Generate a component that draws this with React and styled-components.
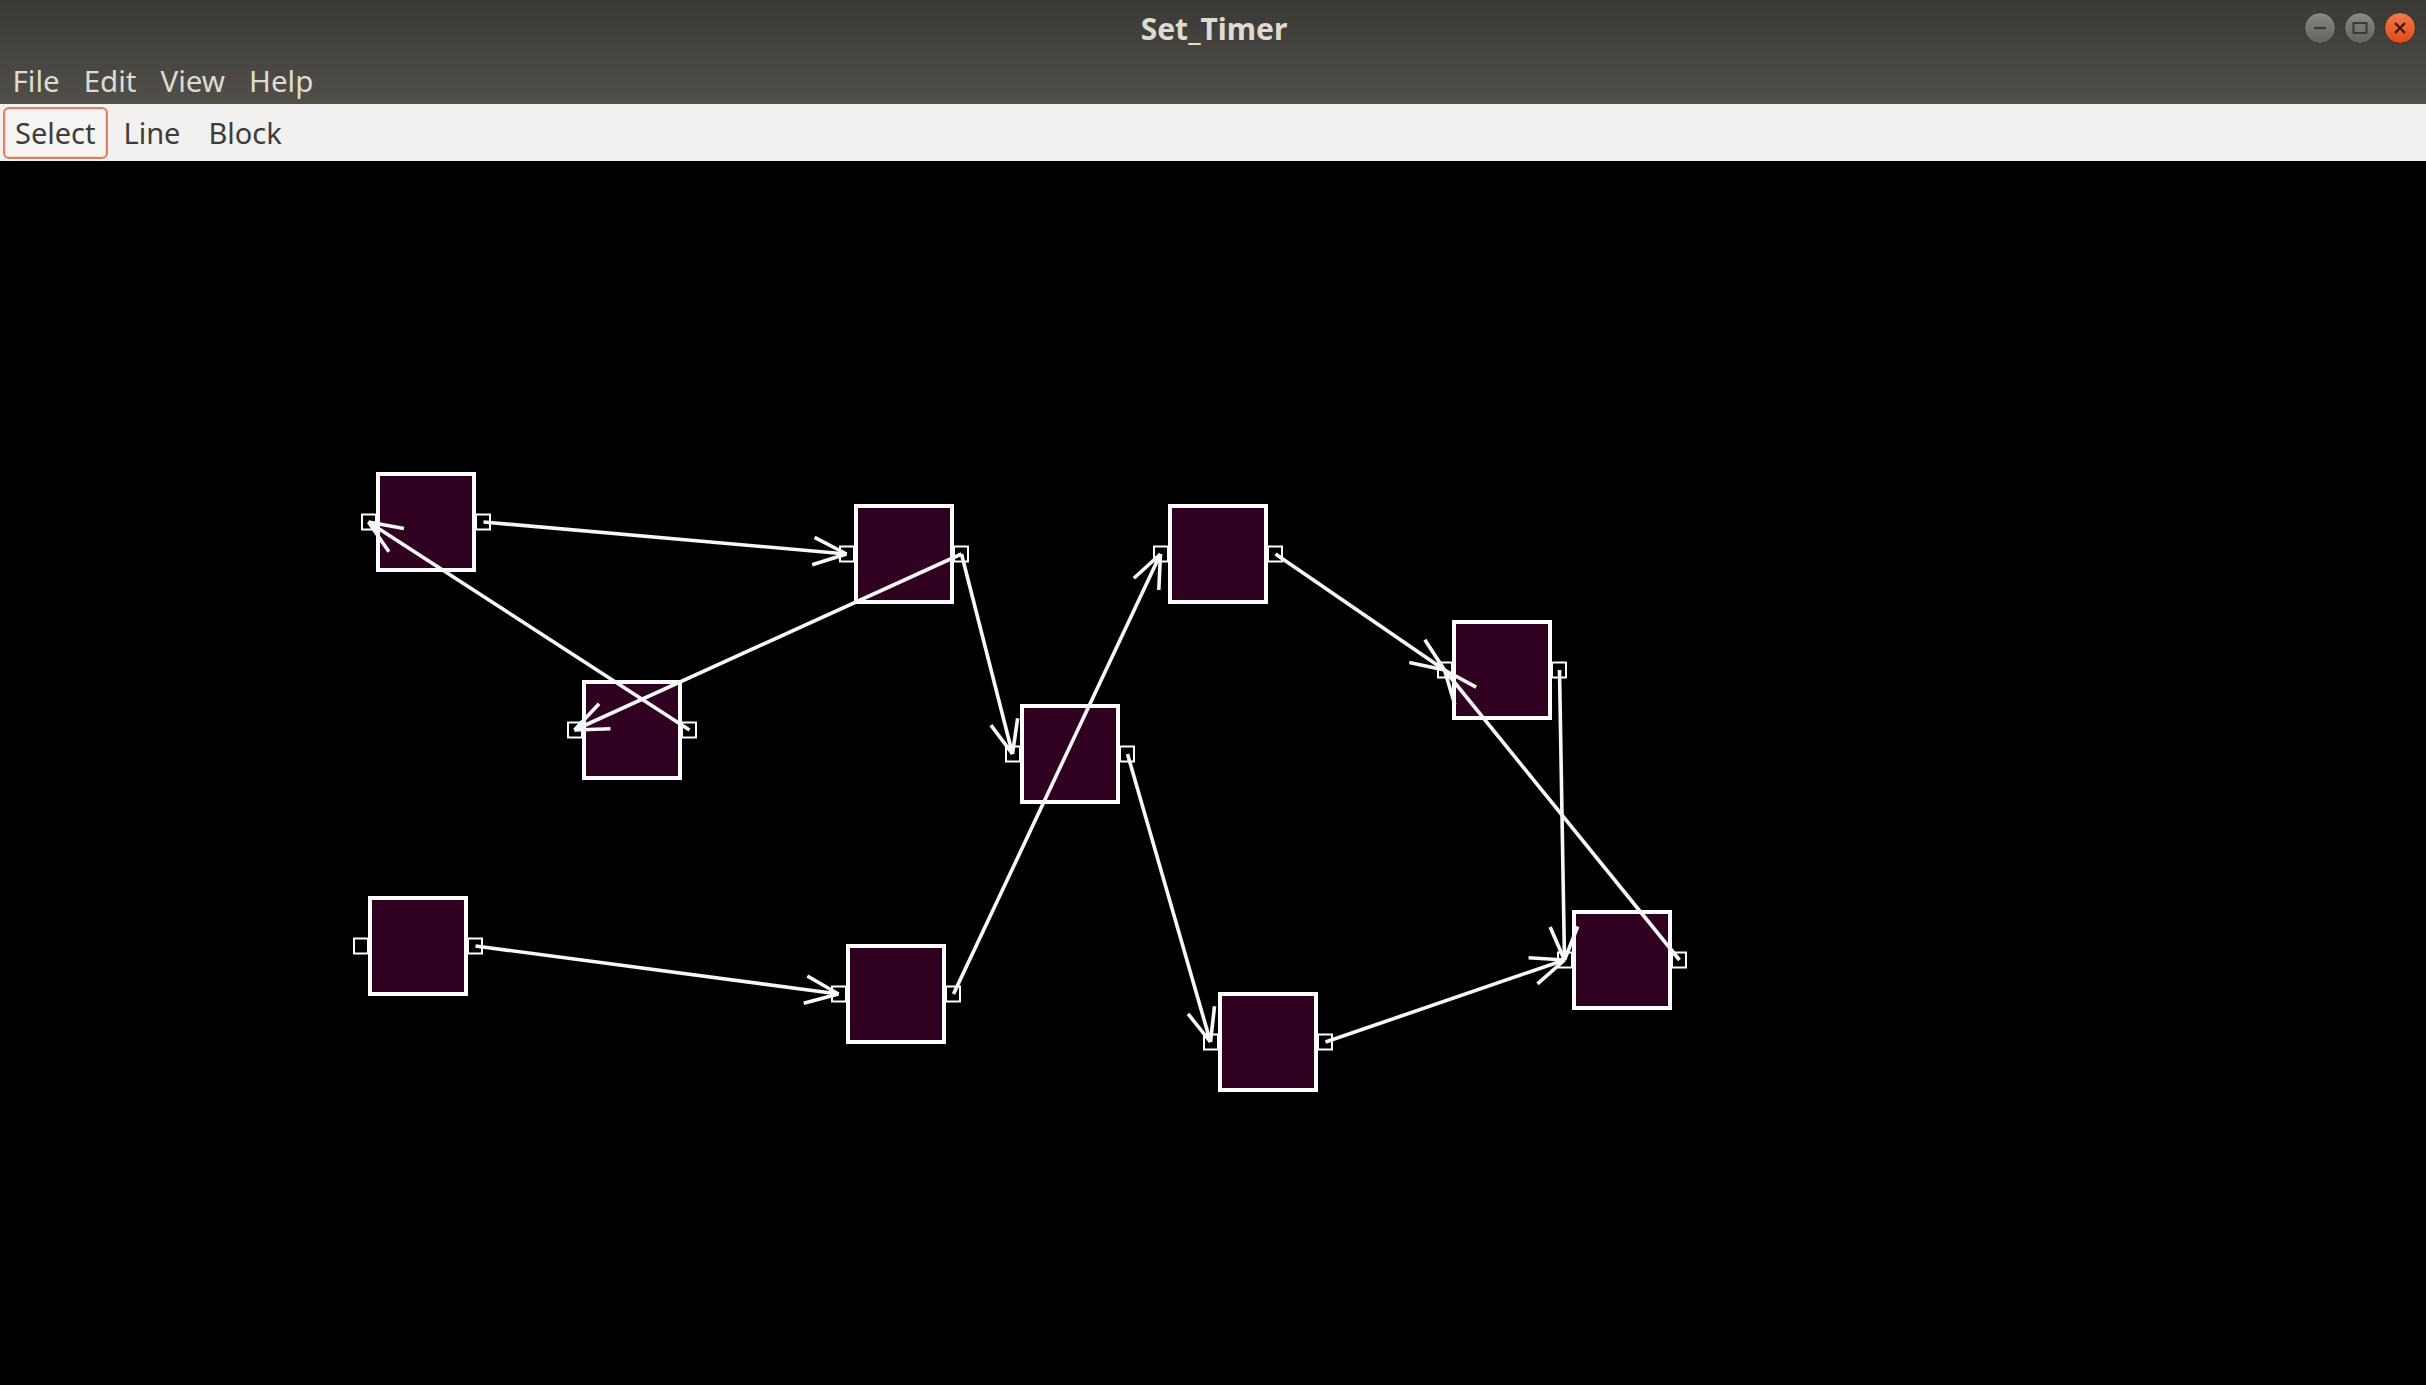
import React from 'react';
import styled, { createGlobalStyle } from 'styled-components';

const GlobalStyle = createGlobalStyle`
  html, body {
    margin: 0;
    padding: 0;
    background: #000;
  }
  #root {
    height: 100vh;
  }
`;

// diagram data, page coordinates of each block's outer top-left corner
const blocks = {
  A: [376, 472],
  B: [582, 680],
  C: [854, 504],
  D: [368, 896],
  E: [1020, 704],
  F: [846, 944],
  G: [1168, 504],
  H: [1218, 992],
  I: [1452, 620],
  J: [1572, 910],
};

const links = [
  ['A', 'C'],
  ['B', 'A'],
  ['C', 'B'],
  ['C', 'E'],
  ['D', 'F'],
  ['F', 'G'],
  ['E', 'H'],
  ['G', 'I'],
  ['H', 'J'],
  ['I', 'J'],
  ['J', 'I'],
];

const SIZE = 100;
const CANVAS_TOP = 161;

const outPort = (id) => {
  const [x, y] = blocks[id];
  return [x + SIZE + 7.5, y + SIZE / 2];
};
const inPort = (id) => {
  const [x, y] = blocks[id];
  return [x - 7.5, y + SIZE / 2];
};

const arrowHead = (from, to, len = 36, spread = Math.PI / 8) => {
  const back = Math.atan2(from[1] - to[1], from[0] - to[0]);
  return [back - spread, back + spread].map((a) => [
    to[0] + Math.cos(a) * len,
    to[1] + Math.sin(a) * len,
  ]);
};

const App = () => {
  return (
    <Window>
      <GlobalStyle />
      <Header>
        <TitleBar>
          <Title>Set_Timer</Title>
          <WindowButtons>
            <RoundButton>
              <svg width="32" height="32" viewBox="0 0 32 32">
                <line x1="10" y1="16" x2="22" y2="16" stroke="#3a3935" strokeWidth="2.2" />
              </svg>
            </RoundButton>
            <RoundButton>
              <svg width="32" height="32" viewBox="0 0 32 32">
                <rect x="9.5" y="11" width="13" height="10" fill="none" stroke="#3a3935" strokeWidth="2" />
              </svg>
            </RoundButton>
            <RoundButton $close>
              <svg width="32" height="32" viewBox="0 0 32 32">
                <path d="M11 11 L21 21 M21 11 L11 21" stroke="#3a1a0e" strokeWidth="2.4" />
              </svg>
            </RoundButton>
          </WindowButtons>
        </TitleBar>
        <MenuBar>
          <MenuItem>File</MenuItem>
          <MenuItem>Edit</MenuItem>
          <MenuItem>View</MenuItem>
          <MenuItem>Help</MenuItem>
        </MenuBar>
      </Header>
      <Toolbar>
        <ToolButton $active>Select</ToolButton>
        <ToolButton>Line</ToolButton>
        <ToolButton>Block</ToolButton>
      </Toolbar>
      <Canvas>
        <Diagram viewBox={`0 ${CANVAS_TOP} 2426 ${1385 - CANVAS_TOP}`} preserveAspectRatio="xMinYMin slice">
          {Object.entries(blocks).map(([id, [x, y]]) => (
            <g key={id}>
              <rect x={x + 2} y={y + 2} width={SIZE - 4} height={SIZE - 4} fill="#300020" stroke="#fff" strokeWidth="4" />
              <rect x={x - 14} y={y + SIZE / 2 - 7.5} width="14" height="15" fill="#000" stroke="#fff" strokeWidth="2" />
              <rect x={x + SIZE} y={y + SIZE / 2 - 7.5} width="14" height="15" fill="#000" stroke="#fff" strokeWidth="2" />
            </g>
          ))}
          {links.map(([a, b]) => {
            const from = outPort(a);
            const to = inPort(b);
            const [h1, h2] = arrowHead(from, to);
            return (
              <g key={a + b} stroke="#f7f7f7" strokeWidth="3.6" fill="none">
                <line x1={from[0]} y1={from[1]} x2={to[0]} y2={to[1]} />
                <line x1={to[0]} y1={to[1]} x2={h1[0]} y2={h1[1]} />
                <line x1={to[0]} y1={to[1]} x2={h2[0]} y2={h2[1]} />
              </g>
            );
          })}
        </Diagram>
      </Canvas>
    </Window>
  );
};

export default App;

const Window = styled.div`
  height: 100%;
  display: flex;
  flex-direction: column;
  font-family: "Noto Sans", "Open Sans", sans-serif;
`;

const Header = styled.div`
  background: linear-gradient(to bottom, #3a3935 0%, #46443f 50%, #524f49 100%);
  color: #dfdbd2;
`;

const TitleBar = styled.div`
  height: 57px;
  position: relative;
  display: flex;
  align-items: center;
  justify-content: center;
`;

const Title = styled.div`
  font-size: 30px;
  font-weight: 700;
  color: #dfdbd2;
  margin-left: 2px;
`;

const WindowButtons = styled.div`
  position: absolute;
  right: 10px;
  top: 12px;
  display: flex;
  gap: 8px;
`;

const RoundButton = styled.div`
  width: 32px;
  height: 32px;
  border-radius: 50%;
  box-sizing: border-box;
  border: 1px solid #34332f;
  background: ${(p) =>
    p.$close
      ? 'linear-gradient(to bottom, #f47a47, #df4a1a)'
      : 'linear-gradient(to bottom, #8a8883, #64625d)'};
  display: flex;
  align-items: center;
  justify-content: center;
  svg {
    display: block;
    margin: -1px;
  }
`;

const MenuBar = styled.div`
  height: 47px;
  display: flex;
  align-items: center;
  padding-left: 1px;
`;

const MenuItem = styled.div`
  font-size: 29.5px;
  padding: 0 12.5px 0 11.5px;
  line-height: 47px;
  color: #dfdbd2;
`;

const Toolbar = styled.div`
  height: 57px;
  box-sizing: border-box;
  background: #f2f1f0;
  display: flex;
  align-items: center;
  gap: 4px;
  padding-left: 3px;
`;

const ToolButton = styled.div`
  height: 52px;
  box-sizing: border-box;
  padding: 0 10px;
  display: flex;
  align-items: center;
  font-size: 29px;
  color: #3c3c3c;
  border-radius: 6px;
  border: 2px solid ${(p) => (p.$active ? '#d9826a' : 'transparent')};
  background: ${(p) => (p.$active ? '#f6f5f4' : 'transparent')};
  box-shadow: ${(p) => (p.$active ? 'inset 0 0 0 1px #f4d9cf' : 'none')};
`;

const Canvas = styled.div`
  flex: 1;
  background: #000;
  overflow: hidden;
`;

const Diagram = styled.svg`
  display: block;
  width: 100%;
  height: 100%;
`;
